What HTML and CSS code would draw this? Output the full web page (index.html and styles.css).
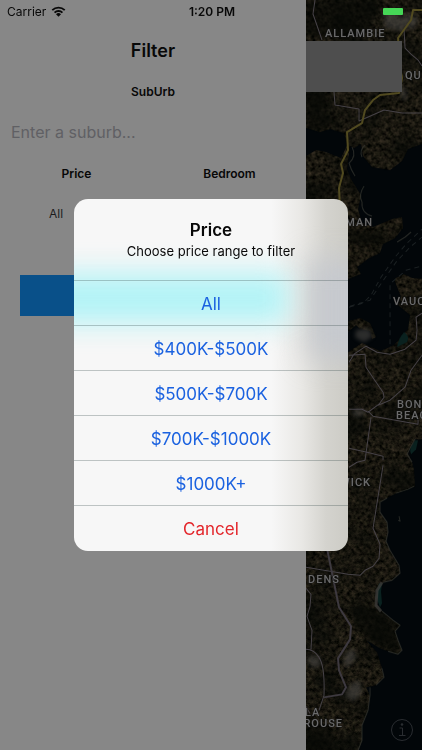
FILE: index.html
```html
<!doctype html>
<html lang="en">
  <head>
    <meta charset="utf-8">
    <meta name="viewport" content="width=device-width, initial-scale=1">
    <title>Filter</title>
    <link rel="stylesheet" href="styles.css">
  </head>

  <body>
    <header class="status-bar">
      <div class="carrier">
        <span>Carrier</span>
        <svg class="wifi" viewBox="0 0 16 12" aria-hidden="true">
          <path d="M1.2 4.5a9.8 9.8 0 0 1 13.6 0M3.7 7.2a6.2 6.2 0 0 1 8.6 0" />
          <path class="wifi-dot" d="M8 11.7 5.3 9a3.8 3.8 0 0 1 5.4 0z" />
        </svg>
      </div>
      <time>1:20 PM</time>
      <div class="battery"></div>
    </header>

    <main class="screen">
      <form class="drawer">
        <h1>Filter</h1>
        <label class="field-title" for="suburb">SubUrb</label>
        <input type="text" id="suburb" class="suburb" placeholder="Enter a suburb...">
        <div class="pickers">
          <div class="picker">
            <label class="field-title" for="price">Price</label>
            <button type="button" id="price" class="picker-value">All</button>
          </div>
          <div class="picker">
            <span class="field-title">Bedroom</span>
          </div>
        </div>
        <button type="submit" class="submit-btn" aria-label="Apply"></button>
      </form>

      <section class="map">
        <svg class="map-tiles" viewBox="306 0 116 750" preserveAspectRatio="xMinYMin slice" aria-hidden="true">
          <defs>
            <filter id="ground" x="0" y="0" width="100%" height="100%" color-interpolation-filters="sRGB">
              <feTurbulence type="fractalNoise" baseFrequency="0.25" numOctaves="4" seed="7" />
              <feColorMatrix values="0.30 0 0 0 -0.050  0.26 0.02 0 0 -0.050  0.20 0 0 0 -0.040  0 0 0 0 1" />
            </filter>
            <filter id="patches" x="0" y="0" width="100%" height="100%" color-interpolation-filters="sRGB">
              <feTurbulence type="fractalNoise" baseFrequency="0.03" numOctaves="3" seed="12" />
              <feColorMatrix values="0 0 0 0 0.02  0 0 0 0 0.03  0 0 0 0 0.02  3 0 0 0 -1.2" />
            </filter>
            <filter id="soft" color-interpolation-filters="sRGB"><feGaussianBlur stdDeviation="2" /></filter>
            <filter id="edge" color-interpolation-filters="sRGB"><feGaussianBlur stdDeviation="0.6" /></filter>
          </defs>
          <rect x="306" width="116" height="750" filter="url(#ground)" />
          <rect x="306" width="116" height="750" filter="url(#patches)" opacity=".6" />

          <g class="bush" filter="url(#soft)">
            <path d="M306 0h70l-4 30-30 10-36-5z" />
            <path d="M306 92h22l-6 18 10 12-26 14z" />
            <path d="M355 605l20 4 20 20 4 22-24-8-22-18z" />
            <path d="M306 714l8 8 16 4 6 24h-30z" />
            <path d="M349 228l30 6 2 6-32 4z" />
          </g>

          <g class="water" filter="url(#edge)">
            <path d="M306 128l14 4 10-3 14 4 3 12-6 13-15-6-10-2-10 6z" />
            <path d="M350 146l4 2 7-4 2 12 9 11 18 3 12-9 6-12 16-6v136l-12-1-8-4-10 5 7 18-3 8 12 10-2 14-14 16-14 6-18-8-17 11v-12l3-10 8-7 4 4 10 2 2 8 4-2-6-14-10-5-15 4v-42l16-6-4-7 12-9 11-5 3-9 12-6 8-10-1-11-10 2-19 8-11-4-4-14 3-14-10-16-4-10z" />
            <path d="M424 439l-9 0-5 9-2 5 4 9 2 8 1 16-7 3-12 4-8 4-8 5 0 10 7 10 1 10-2 9 4 9 9 15 1 8-8 7-9 2-6 8 0 15 6 7 10 8 7 5-5 6 3 9 4 10-4 4-10-3-8-3-10-6-4-2 11 12 5 16 2 9-8 8-10 2 4 8-2 15-6 15 0 15-4 12h66z" />
          </g>

          <g class="shallows" filter="url(#edge)">
            <path d="M404 332q6 4 3 10l-10 5q1-8 7-15z" />
            <path d="M415 440q-7 8-4 14l5-5 2-9z" />
            <path d="M379 583q-5 12 1 24l2-4-1-12 1-8z" />
          </g>

          <g class="shore" filter="url(#edge)">
            <path d="M352 147q5 9-3 16 2 7 6 13M365 145q-6 5-3 12M364 186q-6 9-2 16-1 11 10 14" />
            <path d="M415 439l-5 9-3 6 5 8M414 486l-6 3-12 4M387 498l-7 4 0 10 7 10 1 10-2 9 4 9 9 15 1 8-8 7-9 2" />
            <path class="sand" d="M382 582l-5 8-1 15 5 6" />
            <path d="M382 611l11 9 7 5-5 6 3 9 4 10-4 4-10-3M382 668l2 9-8 8M370 687l0 8-2 15-6 15 0 15-4 10" />
            <path d="M399 516l1 5-2-1M397 242l8-5 6-5" />
          </g>

          <g class="ferry">
            <path d="M349 307l14-4 8-8 10-18 14-20 12-14 15-14M390 285v64M350 306l20-6 12-18 14-20 14-15 12-10M392 282l14-12 16-4" />
          </g>

          <g class="buildings">
            <path d="M383 14l9-3 7 5 13-2 6 5-4 10-8-2-4 4-10-2-7-1zM400 84l6 6 1 10-5-2zM310 655l9 1 2 9-8 3-6-7zM346 652l8-4 2 10-9 10-4-6zM350 684l10-4 2 13-9 8-8-6zM356 330l12-2 5 8-9 6-9-5zM354 408l12 2-3 6-10 0z" filter="url(#soft)" />
          </g>

          <g class="roads">
            <path d="M315 0l-2 14 9 26M334 92l1 13 24 4 0 12 25-11 18 3 20 0M404 30l1 18 6 6 7 6 4 6" />
            <path d="M349 362l5-8 12-8 11 6 13 2 15-5 11-9 1-10-1-13 6-4M349 355l16-1 1 13 8 12 9 13 1 5-5 7-11 8-6-3h-13M378 405l12-5 15-13 6-17 11-15M368 411l5 5 45 8v-5M371 417l-6 43-8 2-8 5M349 448l18 4 16 4v4" />
            <path d="M383 465l-10 63 7 16-1 14-6 8-8 4-5 5-12-1-42-7" />
            <path d="M306 588l5 6-1 12-3 10 5 14-1 19M306 649q8 0 13 8 6 9 5 38l-5 15M306 706l4 7" />
            <path class="wide" d="M327 548l12 59 12 19-1 13-12 19 1 12 7 17-4 7-18 3" />
          </g>

          <g class="highway">
            <path d="M422 10h-9l-2 10-13 18 1 22 3 18-3 15-19 2-7 5-8 10-3 13-15 9 1 18-7 14 2 9-4 15 1 21" />
          </g>

          <g class="place-names">
            <text x="325" y="37">ALLAMBIE</text>
            <text x="330" y="50">HEIGHTS</text>
            <text x="405" y="79">QUEENSCLIFF</text>
            <text x="373" y="226" text-anchor="end">MOSMAN</text>
            <text x="393" y="305">VAUCLUSE</text>
            <text x="397" y="408">BONDI</text>
            <text x="396" y="419">BEACH</text>
            <text x="371" y="486" text-anchor="end">RANDWICK</text>
            <text x="308" y="583">DENS</text>
            <text x="305" y="716">LA</text>
            <text x="343" y="727" text-anchor="end">PEROUSE</text>
          </g>
        </svg>
        <div class="map-card"></div>
        <button type="button" class="info-btn" aria-label="Map information">
          <svg viewBox="0 0 24 24" aria-hidden="true">
            <circle cx="12" cy="12" r="10.5" />
            <path d="M9.500 10H12.500V17.500M9 17.500H15.500" />
            <circle class="info-dot" cx="12" cy="6.500" r="1.300" />
          </svg>
        </button>
      </section>
    </main>

    <div class="overlay">
      <section class="dialog" role="dialog" aria-labelledby="dialog-title">
        <div class="dialog-header">
          <h2 id="dialog-title">Price</h2>
          <p>Choose price range to filter</p>
        </div>
        <button type="button">All</button>
        <button type="button">$400K-$500K</button>
        <button type="button">$500K-$700K</button>
        <button type="button">$700K-$1000K</button>
        <button type="button">$1000K+</button>
        <button type="button" class="cancel">Cancel</button>
      </section>
    </div>
  </body>
</html>
```

FILE: styles.css
```css
*,
*::before,
*::after {
  box-sizing: border-box;
  margin: 0;
  padding: 0;
}

body {
  font-family: Inter, Roboto, "Liberation Sans", sans-serif;
  color: #080808;
  background-color: #878787;
}

button,
input {
  font: inherit;
  border: none;
  background: none;
}

/* Status bar */
.status-bar {
  position: absolute;
  top: 0;
  left: 0;
  right: 0;
  z-index: 1;
  display: grid;
  grid-template-columns: 1fr auto 1fr;
  align-items: center;
  height: 22px;
  padding: 0 19px 0 7px;
  font-size: 12px;
}

.carrier {
  display: flex;
  align-items: center;
  gap: 5px;
}

.status-bar time {
  font-weight: 600;
  padding-left: 14px;
}

.wifi {
  width: 15px;
  height: 11px;
  fill: none;
  stroke: #080808;
  stroke-width: 2;
}

.wifi .wifi-dot {
  fill: #080808;
  stroke: none;
}

.battery {
  justify-self: end;
  width: 20px;
  height: 7px;
  border-radius: 1px;
  background-color: #46d757;
}

/* Page */
.screen {
  display: grid;
  grid-template-columns: 72.5% 1fr;
  min-height: 100vh;
}

.drawer {
  display: flex;
  flex-direction: column;
  padding-top: 36px;
  background-color: #878787;
}

.drawer h1 {
  font-size: 18px;
  font-weight: 600;
  line-height: 30px;
  text-align: center;
}

.field-title {
  font-size: 12px;
  font-weight: 600;
  line-height: 20px;
  text-align: center;
}

.drawer > .field-title {
  margin-top: 16px;
}

.suburb {
  height: 40px;
  margin-top: 10px;
  padding: 0 11px;
  font-size: 16px;
}

.suburb::placeholder {
  color: #606064;
  opacity: 1;
}

.pickers {
  display: grid;
  grid-template-columns: 1fr 1fr;
  margin-top: 12px;
}

.picker {
  display: flex;
  flex-direction: column;
  height: 72px;
}

.picker-value {
  align-self: flex-start;
  margin-top: 20px;
  padding: 0 49px;
  font-size: 12px;
  line-height: 20px;
  color: #1c1c1c;
}

.submit-btn {
  height: 41px;
  margin: 39px 20px 0;
  background-color: #095089;
}

/* Map */
.map {
  position: relative;
  overflow: hidden;
  background-color: #020608;
}

.map-tiles {
  position: absolute;
  inset: 0;
  width: 100%;
  height: 100%;
}

.map-tiles path {
  fill: none;
  stroke-linejoin: round;
}

.map-tiles .bush path {
  fill: #060805;
  opacity: 0.6;
}

.map-tiles .water path {
  fill: #020609;
}

.map-tiles .shallows path {
  fill: #0a211f;
}

.map-tiles .shore path {
  stroke: #33342f;
  stroke-width: 1;
  opacity: 0.8;
}

.map-tiles .shore .sand {
  stroke: #3d3c39;
  stroke-width: 3;
}

.map-tiles .ferry path {
  stroke: #1b2022;
  stroke-dasharray: 5 4;
}

.map-tiles .buildings path {
  fill: #4a4845;
  opacity: 0.6;
}

.map-tiles .roads path {
  stroke: #464247;
  stroke-width: 1;
}

.map-tiles .roads .wide {
  stroke: #3d393f;
  stroke-width: 2;
}

.map-tiles .highway path {
  stroke: #514a20;
  stroke-width: 2;
}

.place-names {
  font-family: Roboto, "Liberation Sans", sans-serif;
  font-size: 11px;
  font-weight: 500;
  letter-spacing: 1px;
  fill: #6a6a6a;
  stroke: #111;
  stroke-width: 1px;
  paint-order: stroke;
}

.map-card {
  position: relative;
  height: 51px;
  margin: 41px 20px 0 0;
  background-color: #4e4e4e;
}

.info-btn {
  position: absolute;
  right: 8px;
  bottom: 8px;
  width: 24px;
  height: 24px;
}

.info-btn svg {
  display: block;
  fill: none;
  stroke: #2a2d31;
  stroke-width: 1;
}

.info-btn .info-dot {
  fill: #2a2d31;
  stroke: none;
}

/* Alert */
.overlay {
  position: fixed;
  inset: 0;
  z-index: 2;
  display: flex;
  align-items: center;
  justify-content: center;
}

.dialog {
  position: relative;
  display: flex;
  flex-direction: column;
  width: 65%;
  padding-bottom: 1px;
  overflow: hidden;
  border-radius: 14px;
  background: linear-gradient(to right, #f7f7f7 72%, #e9e8e5 83%, #d4d3ce 92%, #cccbc5);
}

/* tints showing through the frosted panel */
.dialog::before,
.dialog::after {
  content: "";
  position: absolute;
  filter: blur(14px);
}

.dialog::before {
  top: 60px;
  right: -30px;
  width: 70px;
  height: 100px;
  background-color: #c6c9ce;
}

.dialog::after {
  top: 74px;
  left: -30px;
  right: 22%;
  height: 50px;
  background-color: #b2f3f6;
}

.dialog > * {
  position: relative;
  z-index: 1;
}

.dialog-header {
  height: 81px;
  padding-top: 19px;
  text-align: center;
}

.dialog h2 {
  font-size: 17px;
  font-weight: 600;
  line-height: 24px;
}

.dialog p {
  font-size: 13px;
  line-height: 19px;
}

.dialog button {
  height: 45px;
  padding-top: 2px;
  border-top: 1px solid rgba(40, 60, 60, 0.28);
  font-size: 17px;
  color: #1b62e0;
}

.dialog .cancel {
  color: #e3262b;
}
```
